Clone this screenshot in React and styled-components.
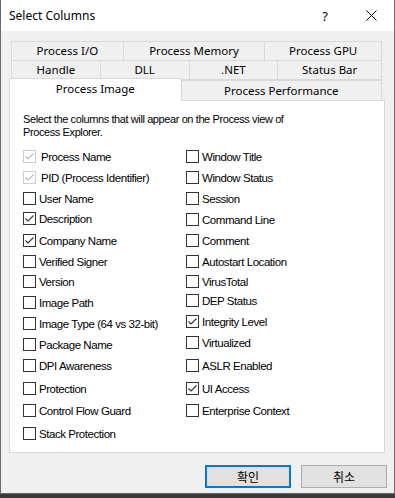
import React from "react";
import styled, { createGlobalStyle } from "styled-components";

const Global = createGlobalStyle`
  html, body { margin: 0; padding: 0; background: #3a3a3a; }
  body { width: 395px; height: 498px; overflow: hidden; }
`;

const Window = styled.div`
  box-sizing: border-box;
  width: 395px;
  height: 494px;
  background: #f0f0f0;
  border-left: 1px solid #6a6a6a;
  border-right: 1px solid #6a6a6a;
  border-bottom: 1px solid #6a6a6a;
  display: flex;
  flex-direction: column;
  font-family: "Liberation Sans", Arial, sans-serif;
  color: #000;
`;

const TitleBar = styled.div`
  height: 31px;
  background: #fff;
  display: flex;
  align-items: center;
  padding-left: 8px;
  font-family: "Noto Sans", "Liberation Sans", sans-serif;
  font-size: 12px;
`;

const Title = styled.div`
  flex: 1;
  padding-bottom: 1px;
`;

const HelpGlyph = styled.div`
  width: 46px;
  text-align: center;
  font-size: 13px;
  margin-right: 0px;
`;

const CloseBtn = styled.div`
  width: 46px;
  height: 31px;
  display: flex;
  align-items: center;
  justify-content: center;
`;

const Tabs = styled.div`
  padding: 10px 12px 0 9px;
  display: flex;
  flex-direction: column;
  font-family: "Noto Sans", "Liberation Sans", sans-serif;
  font-size: 11.5px;
`;

const TabRow = styled.div`
  display: flex;
  padding-left: 1px;
  margin-top: ${(p) => p.$overlap || 0}px;
`;

const Tab = styled.div`
  box-sizing: border-box;
  width: ${(p) => p.$w}px;
  height: 20px;
  border: 1px solid #d9d9d9;
  border-left-width: ${(p) => (p.$first ? 1 : 0)}px;
  background: #f0f0f0;
  display: flex;
  align-items: center;
  justify-content: center;
  line-height: 1;
  padding-bottom: 1px;
`;

const FrontRow = styled.div`
  display: flex;
  align-items: flex-end;
  margin-top: -2px;
  margin-left: -1px;
  position: relative;
  z-index: 1;
  margin-bottom: -1px;
`;

const FrontTab = styled.div`
  box-sizing: border-box;
  width: ${(p) => p.$w}px;
  height: ${(p) => (p.$active ? 23 : 21)}px;
  background: ${(p) => (p.$active ? "#fff" : "#f0f0f0")};
  border: 1px solid #d9d9d9;
  border-bottom: ${(p) => (p.$active ? "none" : "1px solid #d9d9d9")};
  border-left-width: ${(p) => (p.$active ? 1 : 0)}px;
  display: flex;
  align-items: center;
  justify-content: center;
  padding-bottom: ${(p) => (p.$active ? 4 : 0)}px;
`;

const Panel = styled.div`
  box-sizing: border-box;
  margin-left: -1px;
  width: 376px;
  height: 353px;
  background: #fff;
  border: 1px solid #d9d9d9;
  padding: 12px 0 0 13px;
  font-family: "Liberation Sans", Arial, sans-serif;
  font-size: 11px;
`;

const Intro = styled.p`
  margin: 0;
  line-height: 13px;
  width: 275px;
  letter-spacing: -0.4px;
`;

const Columns = styled.div`
  display: grid;
  grid-template-columns: 163px 1fr;
  margin-top: 7px;
`;

const Col = styled.div`
  display: flex;
  flex-direction: column;
`;

const Row = styled.label`
  height: 21px;
  margin-top: ${(p) => p.$shift || 0}px;
  display: flex;
  align-items: center;
  gap: ${(p) => (p.$disabled ? 5 : 3)}px;
  font-size: 11.5px;
  letter-spacing: -0.45px;
  white-space: nowrap;
`;

const Box = styled.span`
  box-sizing: border-box;
  width: 13px;
  height: 13px;
  flex: none;
  border: 1px solid ${(p) => (p.$disabled ? "#cccccc" : "#333333")};
  background: #fff;
  display: flex;
  align-items: center;
  justify-content: center;
`;

const Footer = styled.div`
  display: flex;
  justify-content: flex-end;
  gap: 10px;
  padding: 12px 7px 0 0;
`;

const Button = styled.div`
  box-sizing: border-box;
  width: 86px;
  height: 23px;
  background: #e1e1e1;
  border: ${(p) => (p.$focus ? "2px solid #0078d7" : "1px solid #adadad")};
  display: flex;
  align-items: center;
  justify-content: center;
  font-family: "Noto Sans CJK KR", "Noto Sans", sans-serif;
  font-size: 12px;
`;

function Check({ checked, disabled }) {
  return (
    <Box $disabled={disabled}>
      {checked && (
        <svg width="11" height="11" viewBox="0 0 11 11">
          <polyline
            points="1.5,5.5 4,8 9.5,2.5"
            fill="none"
            stroke={disabled ? "#b8b8b8" : "#333"}
            strokeWidth="1.1"
          />
        </svg>
      )}
    </Box>
  );
}

const left = [
  { t: "Process Name", c: true, d: true },
  { t: "PID (Process Identifier)", c: true, d: true },
  { t: "User Name" },
  { t: "Description", c: true, s: -1 },
  { t: "Company Name", c: true, s: 1 },
  { t: "Verified Signer" },
  { t: "Version", s: -1 },
  { t: "Image Path" },
  { t: "Image Type (64 vs 32-bit)" },
  { t: "Package Name" },
  { t: "DPI Awareness" },
  { t: "Protection", s: 2 },
  { t: "Control Flow Guard", s: 1 },
  { t: "Stack Protection", s: 2 },
];

const right = [
  { t: "Window Title" },
  { t: "Window Status" },
  { t: "Session" },
  { t: "Command Line" },
  { t: "Comment" },
  { t: "Autostart Location" },
  { t: "VirusTotal", s: -1 },
  { t: "DEP Status", s: -2 },
  { t: "Integrity Level", c: true },
  { t: "Virtualized" },
  { t: "ASLR Enabled", s: 2 },
  { t: "UI Access", c: true, s: 2 },
  { t: "Enterprise Context", s: 1 },
];

function List({ items }) {
  return (
    <Col>
      {items.map((it) => (
        <Row key={it.t} $shift={it.s} $disabled={it.d}>
          <Check checked={it.c} disabled={it.d} />
          <span>{it.t}</span>
        </Row>
      ))}
    </Col>
  );
}

export default function App() {
  return (
    <>
      <Global />
      <Window>
        <TitleBar>
          <Title>Select Columns</Title>
          <HelpGlyph>?</HelpGlyph>
          <CloseBtn>
            <svg width="11" height="11" viewBox="0 0 11 11">
              <path d="M0.5 0.5 L10.5 10.5 M10.5 0.5 L0.5 10.5" stroke="#000" strokeWidth="1" />
            </svg>
          </CloseBtn>
        </TitleBar>
        <Tabs>
          <TabRow>
            <Tab $w={113} $first>Process I/O</Tab>
            <Tab $w={142}>Process Memory</Tab>
            <Tab $w={117}>Process GPU</Tab>
          </TabRow>
          <TabRow $overlap={-1}>
            <Tab $w={90} $first>Handle</Tab>
            <Tab $w={89}>DLL</Tab>
            <Tab $w={89}>.NET</Tab>
            <Tab $w={104}>Status Bar</Tab>
          </TabRow>
          <FrontRow>
            <FrontTab $w={174} $active>Process Image</FrontTab>
            <FrontTab $w={202}>Process Performance</FrontTab>
          </FrontRow>
          <Panel>
            <Intro>
              Select the columns that will appear on the Process view of Process Explorer.
            </Intro>
            <Columns>
              <List items={left} />
              <List items={right} />
            </Columns>
          </Panel>
        </Tabs>
        <Footer>
          <Button $focus>확인</Button>
          <Button>취소</Button>
        </Footer>
      </Window>
    </>
  );
}
